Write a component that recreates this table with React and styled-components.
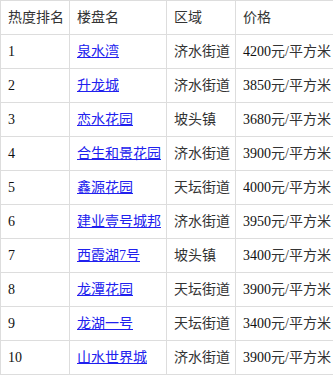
import React from "react";
import styled, { createGlobalStyle } from "styled-components";

const rows = [
    { rank: 1, name: "泉水湾", area: "济水街道", price: 4200 },
    { rank: 2, name: "升龙城", area: "济水街道", price: 3850 },
    { rank: 3, name: "恋水花园", area: "坡头镇", price: 3680 },
    { rank: 4, name: "合生和景花园", area: "济水街道", price: 3900 },
    { rank: 5, name: "鑫源花园", area: "天坛街道", price: 4000 },
    { rank: 6, name: "建业壹号城邦", area: "济水街道", price: 3950 },
    { rank: 7, name: "西霞湖7号", area: "坡头镇", price: 3400 },
    { rank: 8, name: "龙潭花园", area: "天坛街道", price: 3900 },
    { rank: 9, name: "龙湖一号", area: "天坛街道", price: 3400 },
    { rank: 10, name: "山水世界城", area: "济水街道", price: 3900 },
];

const GlobalStyle = createGlobalStyle`
    body {
        margin: 0;
        background: #fff;
        font-family: "Liberation Serif", "Noto Sans CJK SC", serif;
    }
`;

const Table = styled.table`
    width: 333px;
    table-layout: fixed;
    border-collapse: collapse;
    font-size: 14px;
    line-height: 17px;
    color: #333;
`;

const Col = styled.col`
    width: ${props => props.w}px;
`;

const Cell = styled.td`
    border: 1px solid #ddd;
    padding: 8px 0 8px 7px;
    text-align: left;
    white-space: nowrap;
    overflow: visible;
    font-weight: normal;
`;

const Head = styled(Cell).attrs({ as: "th" })``;

const Num = styled.span`
    color: #111;
`;

const Link = styled.a`
    color: #2020ee;
    text-decoration: underline;
`;

const App = () => (
    <>
        <GlobalStyle />
        <Table>
            <colgroup>
                <Col w={69} />
                <Col w={97} />
                <Col w={69} />
                <Col w={98} />
            </colgroup>
            <thead>
                <tr>
                    <Head>热度排名</Head>
                    <Head>楼盘名</Head>
                    <Head>区域</Head>
                    <Head>价格</Head>
                </tr>
            </thead>
            <tbody>
                {rows.map(r => (
                    <tr key={r.rank}>
                        <Cell><Num>{r.rank}</Num></Cell>
                        <Cell><Link href="#">{r.name}</Link></Cell>
                        <Cell>{r.area}</Cell>
                        <Cell><Num>{r.price}</Num>元/平方米</Cell>
                    </tr>
                ))}
            </tbody>
        </Table>
    </>
);

export default App;
